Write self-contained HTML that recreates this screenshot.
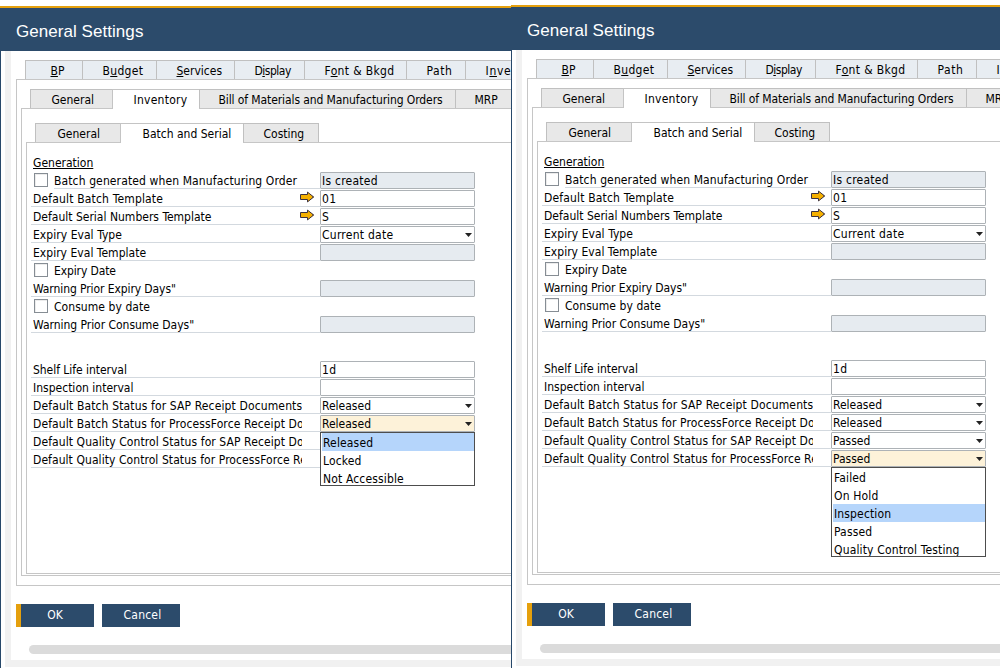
<!DOCTYPE html>
<html lang="en"><head><meta charset="utf-8"><title>General Settings</title>
<style>
*{box-sizing:border-box;margin:0;padding:0}
html,body{width:1000px;height:668px;overflow:hidden;background:#fff}
body{position:relative;font-family:"DejaVu Sans Condensed","DejaVu Sans","Liberation Sans",sans-serif;font-size:12px;font-stretch:condensed;color:#000}
.win{position:absolute;height:680px;overflow:hidden;background:#fff}
.win *{position:absolute}
.gold{left:0;top:6px;width:600px;height:2px;background:#e5a00d}
.bar{left:0;top:8px;width:600px;height:43px;background:#2c4b6b}
.title{left:16px;top:20px;letter-spacing:.05px;height:24px;line-height:24px;font-family:"Liberation Sans",sans-serif;font-size:17px;color:#fff;white-space:nowrap}
.lb{left:0;top:51px;width:1px;height:680px;background:#27486a}
.gv{left:5px;top:51px;width:6px;height:616px;background:#f1f1f1}
.gh{left:5px;top:660px;width:600px;height:7px;background:#f1f1f1}
.panel{border:1px solid #c6c6c6;background:#fff;width:600px}
.tab{border:1px solid #c0c0c0;border-bottom:none;height:19px;line-height:19px;white-space:nowrap;overflow:hidden}
.tab i{font-style:normal;position:absolute;top:1px}
.t1{background:#e8edf2;top:60px}
.t2{background:#e8e8e8;top:89px}
.t3{background:#e8e8e8;top:123px}
.tab.act{background:#fff;height:20px;border-color:#c4c4c4}
.win u{position:static;text-decoration:underline;text-underline-offset:1px}
.lab{left:33px;width:269px;height:17px;line-height:17px;white-space:nowrap;overflow:hidden}
.lab.ck{left:54px;width:248px}
.ul{left:31px;width:289px;height:1px;background:#d3d9df}
.cb{left:34px;width:14px;height:14px;border:1px solid #868d94;background:#fff;box-shadow:inset 1px 1px 0 #ececec}
.f{left:320px;width:155px;height:17px;border:1px solid #adb2b6;border-radius:1px;background:#fff;line-height:15px;white-space:nowrap;overflow:hidden}
.f span{left:1px;top:1px}
.f.dis{background:#e6ebf0}
.f.on{background:#fdf2d9}
.f svg{right:2px;top:6px}
.arr{left:299px}
.list{left:320px;width:155px;border:1px solid #4d4d4d;background:#fff;overflow:hidden}
.list div{left:1px;width:152px;height:18px;line-height:18px;padding:1px 0 0 1px;white-space:nowrap;letter-spacing:.15px}
.list .hl{background:#b5d5fb}
.btn{top:604px;width:78px;height:23px;background:#2c4b6b;color:#fff;text-align:center;line-height:22px}
.btn b{left:0;top:0;width:5px;height:23px;background:#e5a00d}
.sb{left:29px;top:645px;width:600px;height:9px;border-radius:5px;background:#dbdbdb}
</style></head>
<body>
<div class="win" style="left:0px;top:0px;width:511px">
<div class="gold"></div><div class="bar"></div><div class="title">General Settings</div>
<div class="gv"></div><div class="gh"></div><div class="lb"></div>
<div class="panel" style="left:16px;top:79px;height:507px"></div>
<div class="tab t1" style="left:25px;width:58px"><i style="left:24.5px"><u>B</u>P</i></div>
<div class="tab t1" style="left:82px;width:75px"><i style="left:19.5px;letter-spacing:0.3px">B<u>u</u>dget</i></div>
<div class="tab t1" style="left:156px;width:79px"><i style="left:19.5px"><u>S</u>ervices</i></div>
<div class="tab t1" style="left:234px;width:71px"><i style="left:19.5px;letter-spacing:-0.5px">D<u>i</u>splay</i></div>
<div class="tab t1" style="left:304px;width:103px"><i style="left:19.5px;letter-spacing:0.35px">F<u>o</u>nt &amp; Bkgd</i></div>
<div class="tab t1" style="left:406px;width:60px"><i style="left:19.5px;letter-spacing:0.6px">Path</i></div>
<div class="tab t1" style="left:465px;width:88px"><i style="left:19.5px;letter-spacing:0.7px">I<u>n</u>ventory</i></div>
<div class="panel" style="left:21px;top:108px;height:468px"></div>
<div class="tab t2" style="left:30px;width:83px"><i style="left:20.5px">General</i></div>
<div class="tab t2 act" style="left:112px;width:88px"><i style="left:20.5px;letter-spacing:0.25px">Inventory</i></div>
<div class="tab t2" style="left:199px;width:257px"><i style="left:18.5px;letter-spacing:-0.1px">Bill of Materials and Manufacturing Orders</i></div>
<div class="tab t2" style="left:455px;width:86px"><i style="left:18.5px">MRP</i></div>
<div class="panel" style="left:26px;top:142px;height:432px"></div>
<div class="tab t3" style="left:35px;width:86px"><i style="left:21.5px">General</i></div>
<div class="tab t3 act" style="left:120px;width:124px"><i style="left:21.5px">Batch and Serial</i></div>
<div class="tab t3" style="left:243px;width:76px"><i style="left:19.5px">Costing</i></div>
<div class="lab" style="top:155px;letter-spacing:0.008px"><u style="text-underline-offset:1px">Generation</u></div>
<div class="cb" style="top:173px"></div>
<div class="lab ck" style="top:173px;letter-spacing:0.115px">Batch generated when Manufacturing Order</div>
<div class="ul" style="top:188px;left:54px;width:266px"></div>
<div class="f dis" style="top:172px"><span style="letter-spacing:0.25px">Is created</span></div>
<div class="lab" style="top:191px;letter-spacing:0.167px">Default Batch Template</div>
<div class="ul" style="top:206px"></div>
<div class="f" style="top:190px"><span style="letter-spacing:0.5px">01</span></div>
<div class="lab" style="top:209px;letter-spacing:0.005px">Default Serial Numbers Template</div>
<div class="ul" style="top:224px"></div>
<div class="f" style="top:208px"><span>S</span></div>
<svg class="arr" style="top:191px" width="16" height="12" viewBox="0 0 16 12"><path d="M1.5 3.5h7v-2.4l6.2 4.9-6.2 4.9v-2.4h-7z" fill="#f5b000" stroke="#3b3140" stroke-width="1" stroke-linejoin="miter"/><path d="M13.2 5.2l1.6.8-1.6.8z" fill="#3b3140"/></svg>
<svg class="arr" style="top:209px" width="16" height="12" viewBox="0 0 16 12"><path d="M1.5 3.5h7v-2.4l6.2 4.9-6.2 4.9v-2.4h-7z" fill="#f5b000" stroke="#3b3140" stroke-width="1" stroke-linejoin="miter"/><path d="M13.2 5.2l1.6.8-1.6.8z" fill="#3b3140"/></svg>
<div class="lab" style="top:227px;letter-spacing:0.049px">Expiry Eval Type</div>
<div class="ul" style="top:242px"></div>
<div class="f" style="top:226px"><span style="letter-spacing:0.25px">Current date</span><svg width="7" height="4" viewBox="0 0 7 4"><path d="M0 0h7L3.5 4z" fill="#222"/></svg></div>
<div class="lab" style="top:245px;letter-spacing:0.025px">Expiry Eval Template</div>
<div class="ul" style="top:260px"></div>
<div class="f dis" style="top:244px"><span></span></div>
<div class="cb" style="top:263px"></div>
<div class="lab ck" style="top:263px;letter-spacing:-0.122px">Expiry Date</div>
<div class="lab" style="top:281px;letter-spacing:-0.089px">Warning Prior Expiry Days"</div>
<div class="ul" style="top:296px"></div>
<div class="f dis" style="top:280px"><span></span></div>
<div class="cb" style="top:299px"></div>
<div class="lab ck" style="top:299px;letter-spacing:0.06px">Consume by date</div>
<div class="lab" style="top:317px;letter-spacing:-0.03px">Warning Prior Consume Days"</div>
<div class="ul" style="top:332px"></div>
<div class="f dis" style="top:316px"><span></span></div>
<div class="lab" style="top:362px;letter-spacing:-0.039px">Shelf Life interval</div>
<div class="ul" style="top:377px"></div>
<div class="f" style="top:361px"><span style="letter-spacing:0.3px">1d</span></div>
<div class="lab" style="top:380px;letter-spacing:0.008px">Inspection interval</div>
<div class="ul" style="top:395px"></div>
<div class="f" style="top:379px"><span></span></div>
<div class="lab" style="top:398px;letter-spacing:0.134px">Default Batch Status for SAP Receipt Documents</div>
<div class="ul" style="top:413px"></div>
<div class="f" style="top:397px"><span>Released</span><svg width="7" height="4" viewBox="0 0 7 4"><path d="M0 0h7L3.5 4z" fill="#222"/></svg></div>
<div class="lab" style="top:416px;letter-spacing:0.107px">Default Batch Status for ProcessForce Receipt Documents</div>
<div class="ul" style="top:431px"></div>
<div class="f on" style="top:415px"><span>Released</span><svg width="7" height="4" viewBox="0 0 7 4"><path d="M0 0h7L3.5 4z" fill="#222"/></svg></div>
<div class="lab" style="top:434px;letter-spacing:0.085px">Default Quality Control Status for SAP Receipt Documents</div>
<div class="ul" style="top:449px"></div>
<div class="f" style="top:433px"><span>Passed</span><svg width="7" height="4" viewBox="0 0 7 4"><path d="M0 0h7L3.5 4z" fill="#222"/></svg></div>
<div class="lab" style="top:452px;letter-spacing:0.068px">Default Quality Control Status for ProcessForce Receipt Documents</div>
<div class="ul" style="top:467px"></div>
<div class="f" style="top:451px"><span>Passed</span><svg width="7" height="4" viewBox="0 0 7 4"><path d="M0 0h7L3.5 4z" fill="#222"/></svg></div>
<div class="list" style="top:432px;height:54px">
<div class="hl" style="top:0px">Released</div>
<div class="" style="top:18px">Locked</div>
<div class="" style="top:36px">Not Accessible</div>
</div>
<div class="btn" style="left:16px"><b></b>OK</div>
<div class="btn" style="left:102px;padding-left:3px;letter-spacing:.2px">Cancel</div>
<div class="sb"></div>
</div>
<div class="win" style="left:511px;top:-1px;width:489px">
<div class="gold"></div><div class="bar"></div><div class="title">General Settings</div>
<div class="gv"></div><div class="gh"></div><div class="lb"></div>
<div class="panel" style="left:16px;top:79px;height:507px"></div>
<div class="tab t1" style="left:25px;width:58px"><i style="left:24.5px"><u>B</u>P</i></div>
<div class="tab t1" style="left:82px;width:75px"><i style="left:19.5px;letter-spacing:0.3px">B<u>u</u>dget</i></div>
<div class="tab t1" style="left:156px;width:79px"><i style="left:19.5px"><u>S</u>ervices</i></div>
<div class="tab t1" style="left:234px;width:71px"><i style="left:19.5px;letter-spacing:-0.5px">D<u>i</u>splay</i></div>
<div class="tab t1" style="left:304px;width:103px"><i style="left:19.5px;letter-spacing:0.35px">F<u>o</u>nt &amp; Bkgd</i></div>
<div class="tab t1" style="left:406px;width:60px"><i style="left:19.5px;letter-spacing:0.6px">Path</i></div>
<div class="tab t1" style="left:465px;width:88px"><i style="left:19.5px;letter-spacing:0.7px">I<u>n</u>ventory</i></div>
<div class="panel" style="left:21px;top:108px;height:468px"></div>
<div class="tab t2" style="left:30px;width:83px"><i style="left:20.5px">General</i></div>
<div class="tab t2 act" style="left:112px;width:88px"><i style="left:20.5px;letter-spacing:0.25px">Inventory</i></div>
<div class="tab t2" style="left:199px;width:257px"><i style="left:18.5px;letter-spacing:-0.1px">Bill of Materials and Manufacturing Orders</i></div>
<div class="tab t2" style="left:455px;width:86px"><i style="left:18.5px">MRP</i></div>
<div class="panel" style="left:26px;top:142px;height:432px"></div>
<div class="tab t3" style="left:35px;width:86px"><i style="left:21.5px">General</i></div>
<div class="tab t3 act" style="left:120px;width:124px"><i style="left:21.5px">Batch and Serial</i></div>
<div class="tab t3" style="left:243px;width:76px"><i style="left:19.5px">Costing</i></div>
<div class="lab" style="top:155px;letter-spacing:0.008px"><u style="text-underline-offset:1px">Generation</u></div>
<div class="cb" style="top:173px"></div>
<div class="lab ck" style="top:173px;letter-spacing:0.115px">Batch generated when Manufacturing Order</div>
<div class="ul" style="top:188px;left:54px;width:266px"></div>
<div class="f dis" style="top:172px"><span style="letter-spacing:0.25px">Is created</span></div>
<div class="lab" style="top:191px;letter-spacing:0.167px">Default Batch Template</div>
<div class="ul" style="top:206px"></div>
<div class="f" style="top:190px"><span style="letter-spacing:0.5px">01</span></div>
<div class="lab" style="top:209px;letter-spacing:0.005px">Default Serial Numbers Template</div>
<div class="ul" style="top:224px"></div>
<div class="f" style="top:208px"><span>S</span></div>
<svg class="arr" style="top:191px" width="16" height="12" viewBox="0 0 16 12"><path d="M1.5 3.5h7v-2.4l6.2 4.9-6.2 4.9v-2.4h-7z" fill="#f5b000" stroke="#3b3140" stroke-width="1" stroke-linejoin="miter"/><path d="M13.2 5.2l1.6.8-1.6.8z" fill="#3b3140"/></svg>
<svg class="arr" style="top:209px" width="16" height="12" viewBox="0 0 16 12"><path d="M1.5 3.5h7v-2.4l6.2 4.9-6.2 4.9v-2.4h-7z" fill="#f5b000" stroke="#3b3140" stroke-width="1" stroke-linejoin="miter"/><path d="M13.2 5.2l1.6.8-1.6.8z" fill="#3b3140"/></svg>
<div class="lab" style="top:227px;letter-spacing:0.049px">Expiry Eval Type</div>
<div class="ul" style="top:242px"></div>
<div class="f" style="top:226px"><span style="letter-spacing:0.25px">Current date</span><svg width="7" height="4" viewBox="0 0 7 4"><path d="M0 0h7L3.5 4z" fill="#222"/></svg></div>
<div class="lab" style="top:245px;letter-spacing:0.025px">Expiry Eval Template</div>
<div class="ul" style="top:260px"></div>
<div class="f dis" style="top:244px"><span></span></div>
<div class="cb" style="top:263px"></div>
<div class="lab ck" style="top:263px;letter-spacing:-0.122px">Expiry Date</div>
<div class="lab" style="top:281px;letter-spacing:-0.089px">Warning Prior Expiry Days"</div>
<div class="ul" style="top:296px"></div>
<div class="f dis" style="top:280px"><span></span></div>
<div class="cb" style="top:299px"></div>
<div class="lab ck" style="top:299px;letter-spacing:0.06px">Consume by date</div>
<div class="lab" style="top:317px;letter-spacing:-0.03px">Warning Prior Consume Days"</div>
<div class="ul" style="top:332px"></div>
<div class="f dis" style="top:316px"><span></span></div>
<div class="lab" style="top:362px;letter-spacing:-0.039px">Shelf Life interval</div>
<div class="ul" style="top:377px"></div>
<div class="f" style="top:361px"><span style="letter-spacing:0.3px">1d</span></div>
<div class="lab" style="top:380px;letter-spacing:0.008px">Inspection interval</div>
<div class="ul" style="top:395px"></div>
<div class="f" style="top:379px"><span></span></div>
<div class="lab" style="top:398px;letter-spacing:0.134px">Default Batch Status for SAP Receipt Documents</div>
<div class="ul" style="top:413px"></div>
<div class="f" style="top:397px"><span>Released</span><svg width="7" height="4" viewBox="0 0 7 4"><path d="M0 0h7L3.5 4z" fill="#222"/></svg></div>
<div class="lab" style="top:416px;letter-spacing:0.107px">Default Batch Status for ProcessForce Receipt Documents</div>
<div class="ul" style="top:431px"></div>
<div class="f" style="top:415px"><span>Released</span><svg width="7" height="4" viewBox="0 0 7 4"><path d="M0 0h7L3.5 4z" fill="#222"/></svg></div>
<div class="lab" style="top:434px;letter-spacing:0.085px">Default Quality Control Status for SAP Receipt Documents</div>
<div class="ul" style="top:449px"></div>
<div class="f" style="top:433px"><span>Passed</span><svg width="7" height="4" viewBox="0 0 7 4"><path d="M0 0h7L3.5 4z" fill="#222"/></svg></div>
<div class="lab" style="top:452px;letter-spacing:0.068px">Default Quality Control Status for ProcessForce Receipt Documents</div>
<div class="ul" style="top:467px"></div>
<div class="f on" style="top:451px"><span>Passed</span><svg width="7" height="4" viewBox="0 0 7 4"><path d="M0 0h7L3.5 4z" fill="#222"/></svg></div>
<div class="list" style="top:468px;height:90px">
<div class="" style="top:0px">Failed</div>
<div class="" style="top:18px">On Hold</div>
<div class="hl" style="top:36px">Inspection</div>
<div class="" style="top:54px">Passed</div>
<div class="" style="top:72px">Quality Control Testing</div>
</div>
<div class="btn" style="left:16px"><b></b>OK</div>
<div class="btn" style="left:102px;padding-left:3px;letter-spacing:.2px">Cancel</div>
<div class="sb"></div>
</div>
</body></html>
